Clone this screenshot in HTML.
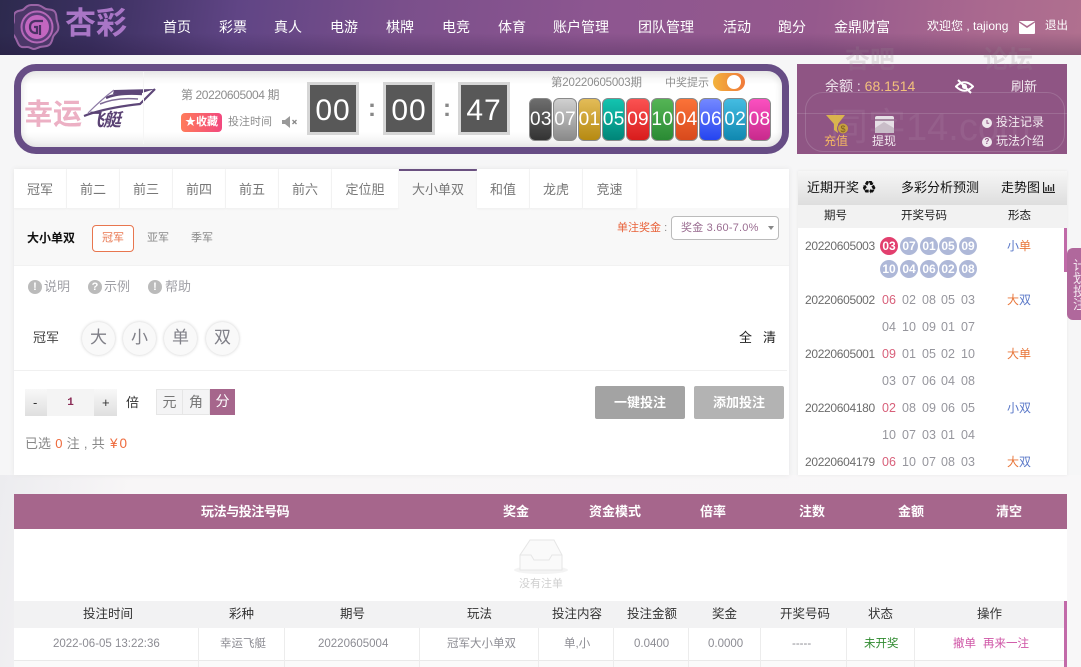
<!DOCTYPE html>
<html lang="zh"><head><meta charset="utf-8"><title>幸运飞艇</title>
<style>
*{box-sizing:border-box}
html,body{margin:0;padding:0}
body{width:1081px;height:667px;overflow:hidden;position:relative;background:#f6f6f7;font-family:"Liberation Sans","Noto Sans CJK SC",sans-serif;font-size:12px;color:#666}
.a{position:absolute}
.t{position:absolute;white-space:nowrap;text-align:center}
.nav{color:#fff;font-size:14px;top:17px;line-height:20px}
.tab{position:absolute;top:169px;height:39px;line-height:41px;text-align:center;font-size:13px;color:#777;background:#fff;border-right:1px solid #f5f5f5;box-shadow:0 1px 2px #eee}
.ball{position:absolute;top:98px;width:23.4px;height:43px;border-radius:6px;border:1px solid #8a8a8a;color:#fff;font-size:19px;line-height:41px;text-align:center;letter-spacing:.3px}
.box{position:absolute;top:82px;width:52px;height:53px;background:#585858;border:3px solid #d6d6d6;color:#fff;font-size:30px;line-height:51px;text-align:center;letter-spacing:1px}
.colon{position:absolute;top:95px;color:#888;font-size:24px;line-height:28px;font-weight:bold}
.circ{position:absolute;top:322px;width:33px;height:33px;border-radius:50%;background:#f9f9f9;box-shadow:0 0 3px #ccc;color:#808088;font-size:17px;line-height:31px;text-align:center}
.ico{position:absolute;width:14px;height:14px;border-radius:50%;background:#bbb;color:#fff;font-size:11px;font-weight:bold;line-height:14px;text-align:center}
.g{color:#a0a0a6}
.n{position:absolute;width:20px;text-align:center;font-size:12.5px;line-height:16px;color:#96969d}
.n.r{color:#d8607a}
.bl{position:absolute;width:18px;height:18px;border-radius:50%;background:#aeb8d8;color:#fff;font-size:12px;line-height:18px;text-align:center;font-weight:bold}
.p{position:absolute;left:805px;font-size:12px;letter-spacing:-.32px;line-height:16px;color:#6c6c6c}
.f{position:absolute;left:1007px;font-size:12px;line-height:16px}
.bh{position:absolute;top:503px;color:#fff;font-weight:bold;font-size:13px;line-height:18px;white-space:nowrap;text-align:center}
.th{position:absolute;top:606px;color:#333;font-size:12.5px;line-height:17px;text-align:center;white-space:nowrap}
.td{position:absolute;top:636px;color:#8c8c93;font-size:11.5px;line-height:17px;text-align:center;white-space:nowrap}
.vl{position:absolute;top:628px;width:1px;height:39px;background:#ececec}
</style></head><body>

<!-- soft background wash -->
<div class="a" style="left:0;top:475px;width:1081px;height:192px;background:linear-gradient(100deg,#ececef 0,#f8f6f7 12%,#f8f7f8 100%)"></div>

<!-- header -->
<div class="a" style="left:0;top:0;width:1081px;height:55px;background:linear-gradient(to bottom,rgba(255,255,255,0) 60%,rgba(30,15,50,.25) 100%),linear-gradient(98deg,#2d2a4e 0,#3b3060 9%,#604585 22%,#7a4f8b 37%,#8d5690 55%,#95598d 75%,#a9688f 90%,#b0708f 100%)"></div>
<svg class="a" style="left:14px;top:3px" width="46" height="47" viewBox="0 0 46 47">
<path d="M23 2c4 0 6 3 9 4s7 0 9 3 1 6 2 9 2 6 1 9-4 4-5 7-1 6-4 8-6 1-9 2-4 2-6 2-4-2-7-2-6 1-8-2-2-5-4-8-4-5-4-8 3-5 3-8-1-7 2-9 6-1 8-3 4-4 7-4z" fill="#4b3768" stroke="#9a64a6" stroke-width="2"/>
<circle cx="23" cy="24" r="15.500" fill="#5a3c78" stroke="#b468b8" stroke-width="2"/>
<circle cx="23" cy="24" r="12" fill="#c266c0"/>
<path d="M29 18h-8q-5 1-5 6t5 6h2v-6h-3M26 22v10" fill="none" stroke="#4a3064" stroke-width="2.200"/>
</svg>
<div class="t" style="left:65px;top:5px;font-size:31px;line-height:38px;font-weight:bold;color:#a976c6;letter-spacing:0">杏彩</div>

<div class="t nav" style="left:163px">首页</div>
<div class="t nav" style="left:219px">彩票</div>
<div class="t nav" style="left:274px">真人</div>
<div class="t nav" style="left:330px">电游</div>
<div class="t nav" style="left:386px">棋牌</div>
<div class="t nav" style="left:442px">电竞</div>
<div class="t nav" style="left:498px">体育</div>
<div class="t nav" style="left:553px">账户管理</div>
<div class="t nav" style="left:638px">团队管理</div>
<div class="t nav" style="left:723px">活动</div>
<div class="t nav" style="left:778px">跑分</div>
<div class="t nav" style="left:834px">金鼎财富</div>
<div class="t" style="left:927px;top:17px;color:#fff;font-size:12px;line-height:18px">欢迎您 , tajiong</div>
<svg class="a" style="left:1019px;top:21px" width="16" height="13" viewBox="0 0 16 13"><path d="M0 1.500 8 7l8-5.500V12a1 1 0 0 1-1 1H1a1 1 0 0 1-1-1zM0 0h16L8 5z" fill="#fff"/></svg>
<div class="t" style="left:1045px;top:17px;color:#fff;font-size:11.500px;line-height:18px">退出</div>

<!-- game panel -->
<div class="a" style="left:14px;top:64px;width:775px;height:90px;border:7px solid #674d85;border-radius:22px;background:linear-gradient(to bottom,#eeeeee 0,#fff 18%,#fff 80%,#eee 100%);box-shadow:inset 0 0 8px #ddd"></div>
<svg class="a" style="left:80px;top:85px" width="78" height="36" viewBox="0 0 78 36">
<path d="M34 5 75 4 62 8 33 9z" fill="#5d4678"/>
<path d="M26 13C34 9 46 8 62 9" fill="none" stroke="#5d4678" stroke-width="2.500"/>
<path d="M20 19C32 14 46 13 58 14" fill="none" stroke="#7d6a95" stroke-width="1.500"/>
<path d="M4 31C22 24 42 21 60 19L75 4" fill="none" stroke="#5d4678" stroke-width="2.200"/>
<path d="M34 5C26 11 18 18 8 28" fill="none" stroke="#8d7aa5" stroke-width="1.200"/>
</svg>
<div class="t" style="left:24px;top:100px;font-size:29px;line-height:30px;font-weight:bold;color:#ecb0c4">幸运</div>
<div class="t" style="left:86px;top:108px;font-size:18px;line-height:24px;font-weight:bold;font-style:italic;color:#5a4274;letter-spacing:-1px">飞艇</div>
<div class="a" style="left:143px;top:72px;width:1px;height:72px;background:#f5f5f5"></div>
<div class="t" style="left:181px;top:87px;font-size:12px;line-height:17px;color:#8d8d8d;letter-spacing:-.4px">第 20220605004 期</div>
<div class="t" style="left:181px;top:113px;width:41px;height:19px;border-radius:4px;background:linear-gradient(90deg,#ff7b5a,#f2487e);color:#fff;font-size:11px;line-height:19px;font-weight:bold">★收藏</div>
<div class="t" style="left:228px;top:113px;font-size:11px;line-height:18px;color:#8d8d8d">投注时间</div>
<svg class="a" style="left:282px;top:116px" width="16" height="12" viewBox="0 0 16 12"><path d="M0 4h3l5-4v12L3 8H0z" fill="#999"/><path d="M10.500 4l4 4m0-4-4 4" stroke="#888" stroke-width="1.300"/></svg>

<div class="box" style="left:307px">00</div>
<div class="colon" style="left:368px">:</div>
<div class="box" style="left:383px">00</div>
<div class="colon" style="left:443px">:</div>
<div class="box" style="left:458px">47</div>

<div class="t" style="left:551px;top:75px;font-size:11.500px;line-height:16px;color:#8d8d8d;letter-spacing:-.2px">第20220605003期</div>
<div class="t" style="left:665px;top:75px;font-size:11px;line-height:16px;color:#8d8d8d">中奖提示</div>
<div class="a" style="left:713px;top:73px;width:32px;height:18px;border-radius:9px;background:linear-gradient(90deg,#f2b23c,#f0793a)"></div>
<div class="a" style="left:727px;top:75px;width:14px;height:14px;border-radius:50%;background:#fff"></div>

<div class="ball" style="left:529px;background:linear-gradient(#6e6e6e,#333)">03</div>
<div class="ball" style="left:553.300px;background:linear-gradient(#d0d0d0,#8a8a8a)">07</div>
<div class="ball" style="left:577.600px;background:linear-gradient(#e3bc58,#b68a12)">01</div>
<div class="ball" style="left:601.900px;background:linear-gradient(#13c4b0,#008578)">05</div>
<div class="ball" style="left:626.200px;background:linear-gradient(#fb5252,#d81c1c)">09</div>
<div class="ball" style="left:650.500px;background:linear-gradient(#55b555,#2a8a34)">10</div>
<div class="ball" style="left:674.800px;background:linear-gradient(#fb7338,#d84a1c)">04</div>
<div class="ball" style="left:699.100px;background:linear-gradient(#7488ff,#2444f0)">06</div>
<div class="ball" style="left:723.400px;background:linear-gradient(#44bce2,#1088b0)">02</div>
<div class="ball" style="left:747.700px;background:linear-gradient(#fb50c0,#c82a8c)">08</div>

<!-- balance panel -->
<div class="a" style="left:797px;top:64px;width:270px;height:90px;background:#8f5584"></div>
<!-- watermark -->
<div class="t" style="left:845px;top:44px;font-size:25px;line-height:32px;font-weight:bold;color:rgba(150,130,145,.22)">杏吧</div>
<div class="t" style="left:983px;top:44px;font-size:25px;line-height:32px;font-weight:bold;color:rgba(150,130,145,.22)">论坛</div>
<div class="a" style="left:805px;top:92px;width:260px;height:60px;border:1.500px solid rgba(215,200,215,.22);border-radius:18px"></div>
<div class="a" style="left:797px;top:113px;width:270px;height:1px;background:rgba(215,200,215,.2)"></div>
<div class="t" style="left:830px;top:106px;font-size:38px;line-height:44px;color:rgba(210,190,205,.1)">同字14.com</div>

<div class="t" style="left:825px;top:76px;font-size:14px;line-height:20px;color:#f0e6ee">余额 : <span style="color:#f2c07c">68.1514</span></div>
<svg class="a" style="left:955px;top:79px" width="19" height="15" viewBox="0 0 19 15"><path d="M1 7.500Q9.500-1 18 7.500 9.500 16 1 7.500z" fill="none" stroke="#fff" stroke-width="2"/><circle cx="9.500" cy="7.500" r="2.500" fill="#fff"/><path d="M3 1l13 13" stroke="#fff" stroke-width="2"/></svg>
<div class="t" style="left:1011px;top:77px;font-size:13px;line-height:19px;color:#f2eaf0">刷新</div>
<svg class="a" style="left:826px;top:115px" width="24" height="20" viewBox="0 0 24 20"><path d="M0 0h19l-7 9v9l-4-3V9z" fill="#d9b44e"/><circle cx="17" cy="13.500" r="5.500" fill="#c9a13e" stroke="#8f5584"/><text x="17" y="17" text-anchor="middle" font-size="9" fill="#7a5a20" font-family="Liberation Sans">$</text></svg>
<div class="t" style="left:824px;top:133px;font-size:12px;line-height:16px;color:#f4b763">充值</div>
<svg class="a" style="left:875px;top:116px" width="19" height="17" viewBox="0 0 19 17"><rect width="19" height="17" rx="2" fill="#e6e0e6"/><rect y="3" width="19" height="2" fill="#a78aa2"/><path d="M0 12 9 6l10 6v5H0z" fill="#c9bdc8"/></svg>
<div class="t" style="left:872px;top:133px;font-size:12px;line-height:16px;color:#f2eaf0">提现</div>
<svg class="a" style="left:982px;top:118px" width="10" height="10" viewBox="0 0 10 10"><circle cx="5" cy="5" r="5" fill="#f0e8ee"/><path d="M5 2v3.200h2.200" fill="none" stroke="#8f5584" stroke-width="1"/></svg>
<div class="t" style="left:996px;top:114px;font-size:12px;line-height:17px;color:#f2eaf0">投注记录</div>
<div class="a" style="left:982px;top:137px;width:10px;height:10px;border-radius:50%;background:#f0e8ee;color:#8f5584;font-size:8px;font-weight:bold;line-height:10px;text-align:center">?</div>
<div class="t" style="left:996px;top:133px;font-size:12px;line-height:17px;color:#f2eaf0">玩法介绍</div>

<!-- main panel -->
<div class="a" style="left:14px;top:169px;width:775px;height:306px;background:#fff;box-shadow:0 0 5px #e6e6e6"></div>
<div class="a" style="left:14px;top:208px;width:775px;height:58px;background:#f8f8f8;border-bottom:1px solid #f2f2f2"></div>
<div class="tab" style="left:14px;width:53px">冠军</div>
<div class="tab" style="left:67px;width:53px">前二</div>
<div class="tab" style="left:120px;width:53px">前三</div>
<div class="tab" style="left:173px;width:53px">前四</div>
<div class="tab" style="left:226px;width:53px">前五</div>
<div class="tab" style="left:279px;width:53px">前六</div>
<div class="tab" style="left:332px;width:67px">定位胆</div>
<div class="tab" style="left:399px;width:78px;height:39px;background:#f8f8f8;border-top:2px solid #6a5080;line-height:38px;box-shadow:none;border-right:0">大小单双</div>
<div class="tab" style="left:477px;width:53px">和值</div>
<div class="tab" style="left:530px;width:53px">龙虎</div>
<div class="tab" style="left:583px;width:54px">竞速</div>

<div class="t" style="left:27px;top:230px;font-size:12px;line-height:17px;color:#111;font-weight:bold">大小单双</div>
<div class="t" style="left:92px;top:225px;width:42px;height:27px;border:1px solid #e8764f;border-radius:4px;background:#fff;color:#e8764f;font-size:11px;line-height:25px">冠军</div>
<div class="t" style="left:147px;top:230px;font-size:11px;line-height:17px;color:#888">亚军</div>
<div class="t" style="left:191px;top:230px;font-size:11px;line-height:17px;color:#888">季军</div>
<div class="t" style="left:617px;top:220px;font-size:11px;line-height:17px;color:#e8623a">单注奖金 <span style="color:#888">:</span></div>
<div class="a" style="left:671px;top:216px;width:108px;height:24px;border:1px solid #bbb;border-radius:4px;background:#fff"></div>
<div class="t" style="left:681px;top:220px;font-size:11px;line-height:17px;color:#9a6d91;letter-spacing:.2px">奖金 3.60-7.0%</div>
<div class="a" style="left:768px;top:226px;width:0;height:0;border:3.500px solid transparent;border-top:4px solid #888"></div>

<div class="ico" style="left:28px;top:280px">!</div><div class="t g" style="left:44px;top:278px;font-size:13px;line-height:18px">说明</div>
<div class="ico" style="left:88px;top:280px">?</div><div class="t g" style="left:104px;top:278px;font-size:13px;line-height:18px">示例</div>
<div class="ico" style="left:148px;top:280px">!</div><div class="t g" style="left:165px;top:278px;font-size:13px;line-height:18px">帮助</div>

<div class="t" style="left:33px;top:329px;font-size:13px;line-height:18px;color:#444">冠军</div>
<div class="circ" style="left:82px">大</div>
<div class="circ" style="left:123px">小</div>
<div class="circ" style="left:164px">单</div>
<div class="circ" style="left:206px">双</div>
<div class="t" style="left:739px;top:329px;font-size:13px;line-height:18px;color:#222">全</div>
<div class="t" style="left:763px;top:329px;font-size:13px;line-height:18px;color:#222">清</div>
<div class="a" style="left:14px;top:370px;width:773px;height:1px;background:#f0f0f0"></div>

<div class="a" style="left:25px;top:389px;width:92px;height:27px;background:linear-gradient(#f8f8f8,#dfdfdf)"></div>
<div class="a" style="left:47px;top:389px;width:47px;height:27px;background:#f4f4f4"></div>
<div class="t" style="left:33px;top:395px;font-size:13px;line-height:16px;color:#333">-</div>
<div class="t" style="left:47px;top:395px;width:47px;font-size:11px;line-height:16px;color:#8a2a55;font-weight:bold;font-family:'Liberation Mono',monospace">1</div>
<div class="t" style="left:102px;top:395px;font-size:13px;line-height:16px;color:#333">+</div>
<div class="t" style="left:126px;top:394px;font-size:13px;line-height:17px;color:#333">倍</div>
<div class="t" style="left:156px;top:389px;width:27px;height:26px;background:#f4f4f5;border:1px solid #e6e6e6;font-size:14px;line-height:24px;color:#777">元</div>
<div class="t" style="left:183px;top:389px;width:27px;height:26px;background:#f4f4f5;border:1px solid #e6e6e6;border-left:0;font-size:14px;line-height:24px;color:#777">角</div>
<div class="t" style="left:210px;top:389px;width:25px;height:26px;background:#a6668c;font-size:14px;line-height:25px;color:#fff">分</div>

<div class="t" style="left:595px;top:386px;width:90px;height:33px;background:#a3a3a3;border-radius:2px;color:#fff;font-size:13px;font-weight:bold;line-height:33px">一键投注</div>
<div class="t" style="left:694px;top:386px;width:90px;height:33px;background:#b3b3b3;border-radius:2px;color:#fff;font-size:13px;font-weight:bold;line-height:33px">添加投注</div>
<div class="t" style="left:25px;top:435px;font-size:13px;line-height:18px;color:#888;word-spacing:.6px">已选 <span style="color:#ee6a3c">0</span> 注 , 共</div>
<div class="t" style="left:110px;top:435px;font-size:13.500px;line-height:18px;color:#ee6a3c;letter-spacing:2px">¥0</div>

<!-- recent draws -->
<div class="a" style="left:798px;top:171px;width:269px;height:304px;background:#fff;box-shadow:0 0 3px #e8e8e8"></div>
<div class="a" style="left:798px;top:171px;width:269px;height:34px;background:linear-gradient(#f6f6f6,#dedede)"></div>
<div class="a" style="left:798px;top:205px;width:269px;height:23px;background:#f2f2f2"></div>
<div class="t" style="left:807px;top:178px;font-size:13px;line-height:19px;color:#111">近期开奖 ♻</div>
<div class="t" style="left:901px;top:178px;font-size:13px;line-height:19px;color:#111">多彩分析预测</div>
<div class="t" style="left:1001px;top:178px;font-size:13px;line-height:19px;color:#111">走势图</div>
<svg class="a" style="left:1043px;top:182px" width="12" height="11" viewBox="0 0 12 11"><path d="M.5 0v10.500H12M3 5v4M5.500 3v6M8 5v4M10.500 2v7" fill="none" stroke="#222" stroke-width="1.300"/></svg>
<div class="t" style="left:824px;top:208px;font-size:11.500px;line-height:16px;color:#222">期号</div>
<div class="t" style="left:901px;top:208px;font-size:11.500px;line-height:16px;color:#222">开奖号码</div>
<div class="t" style="left:1008px;top:208px;font-size:11.500px;line-height:16px;color:#222">形态</div>
<div class="a" style="left:1064px;top:228px;width:3px;height:44px;background:#c06aa8"></div>

<div class="p" style="top:238px">20220605003</div>
<div class="bl" style="left:880px;top:237px;background:#e23f6e">03</div>
<div class="bl" style="left:900px;top:237px">07</div>
<div class="bl" style="left:920px;top:237px">01</div>
<div class="bl" style="left:939px;top:237px">05</div>
<div class="bl" style="left:959px;top:237px">09</div>
<div class="bl" style="left:880px;top:260px">10</div>
<div class="bl" style="left:900px;top:260px">04</div>
<div class="bl" style="left:920px;top:260px">06</div>
<div class="bl" style="left:939px;top:260px">02</div>
<div class="bl" style="left:959px;top:260px">08</div>
<div class="f" style="top:238px"><span style="color:#5a78c8">小</span><span style="color:#e8763a">单</span></div>

<div class="p" style="top:292px">20220605002</div>
<div class="n r" style="left:879px;top:292px">06</div><div class="n" style="left:899px;top:292px">02</div><div class="n" style="left:919px;top:292px">08</div><div class="n" style="left:938px;top:292px">05</div><div class="n" style="left:958px;top:292px">03</div>
<div class="n" style="left:879px;top:319px">04</div><div class="n" style="left:899px;top:319px">10</div><div class="n" style="left:919px;top:319px">09</div><div class="n" style="left:938px;top:319px">01</div><div class="n" style="left:958px;top:319px">07</div>
<div class="f" style="top:292px"><span style="color:#e8763a">大</span><span style="color:#5a78c8">双</span></div>

<div class="p" style="top:346px">20220605001</div>
<div class="n r" style="left:879px;top:346px">09</div><div class="n" style="left:899px;top:346px">01</div><div class="n" style="left:919px;top:346px">05</div><div class="n" style="left:938px;top:346px">02</div><div class="n" style="left:958px;top:346px">10</div>
<div class="n" style="left:879px;top:373px">03</div><div class="n" style="left:899px;top:373px">07</div><div class="n" style="left:919px;top:373px">06</div><div class="n" style="left:938px;top:373px">04</div><div class="n" style="left:958px;top:373px">08</div>
<div class="f" style="top:346px;color:#e8763a">大单</div>

<div class="p" style="top:400px">20220604180</div>
<div class="n r" style="left:879px;top:400px">02</div><div class="n" style="left:899px;top:400px">08</div><div class="n" style="left:919px;top:400px">09</div><div class="n" style="left:938px;top:400px">06</div><div class="n" style="left:958px;top:400px">05</div>
<div class="n" style="left:879px;top:427px">10</div><div class="n" style="left:899px;top:427px">07</div><div class="n" style="left:919px;top:427px">03</div><div class="n" style="left:938px;top:427px">01</div><div class="n" style="left:958px;top:427px">04</div>
<div class="f" style="top:400px;color:#5a78c8">小双</div>

<div class="p" style="top:454px">20220604179</div>
<div class="n r" style="left:879px;top:454px">06</div><div class="n" style="left:899px;top:454px">10</div><div class="n" style="left:919px;top:454px">07</div><div class="n" style="left:938px;top:454px">08</div><div class="n" style="left:958px;top:454px">03</div>
<div class="f" style="top:454px"><span style="color:#e8763a">大</span><span style="color:#5a78c8">双</span></div>

<!-- side tab -->
<div class="a" style="left:1067px;top:248px;width:14px;height:72px;background:#b0689c;border-radius:6px 0 0 6px;overflow:hidden">
<div style="position:absolute;left:6px;top:11px;width:14px;color:#f4e8f0;font-size:13px;line-height:13px;white-space:normal">计划投注</div></div>

<!-- bet list -->
<div class="a" style="left:14px;top:494px;width:1053px;height:35px;background:#a6668c"></div>
<div class="a" style="left:14px;top:529px;width:1053px;height:72px;background:#fff"></div>
<div class="bh" style="left:201px;letter-spacing:-.4px">玩法与投注号码</div>
<div class="bh" style="left:503px">奖金</div>
<div class="bh" style="left:589px">资金模式</div>
<div class="bh" style="left:700px">倍率</div>
<div class="bh" style="left:799px">注数</div>
<div class="bh" style="left:898px">金额</div>
<div class="bh" style="left:996px">清空</div>
<svg class="a" style="left:513px;top:537px" width="56" height="38" viewBox="0 0 56 38"><ellipse cx="28" cy="33" rx="27" ry="4" fill="#f3f3f3"/><path d="M7 18 17 3h24l8 15v15H7z" fill="#fafafa" stroke="#e6e6e6"/><path d="M7 18h11l3 5h15l3-5h10" fill="none" stroke="#e6e6e6"/></svg>
<div class="t" style="left:519px;top:577px;font-size:11px;line-height:15px;color:#cfcfcf">没有注单</div>

<div class="a" style="left:14px;top:601px;width:1053px;height:27px;background:#f2f2f3"></div>
<div class="a" style="left:14px;top:628px;width:1053px;height:39px;background:#fff"></div>
<div class="a" style="left:14px;top:660px;width:1053px;height:7px;background:#fafafa;border-top:1px solid #e9e9e9"></div>
<div class="a" style="left:1064px;top:601px;width:3px;height:66px;background:#c26aa9"></div>
<div class="vl" style="left:198px"></div><div class="vl" style="left:284px"></div><div class="vl" style="left:419px"></div><div class="vl" style="left:538px"></div><div class="vl" style="left:613px"></div><div class="vl" style="left:688px"></div><div class="vl" style="left:760px"></div><div class="vl" style="left:846px"></div><div class="vl" style="left:914px"></div>

<div class="th" style="left:83px">投注时间</div>
<div class="th" style="left:229px">彩种</div>
<div class="th" style="left:340px">期号</div>
<div class="th" style="left:467px">玩法</div>
<div class="th" style="left:552px">投注内容</div>
<div class="th" style="left:627px">投注金额</div>
<div class="th" style="left:712px">奖金</div>
<div class="th" style="left:780px">开奖号码</div>
<div class="th" style="left:868px">状态</div>
<div class="th" style="left:977px">操作</div>

<div class="td" style="left:53px">2022-06-05 13:22:36</div>
<div class="td" style="left:220px">幸运飞艇</div>
<div class="td" style="left:318px">20220605004</div>
<div class="td" style="left:447px">冠军大小单双</div>
<div class="td" style="left:564px">单,小</div>
<div class="td" style="left:634px">0.0400</div>
<div class="td" style="left:708px">0.0000</div>
<div class="td" style="left:792px">-----</div>
<div class="td" style="left:864px;color:#2f8a2f">未开奖</div>
<div class="td" style="left:953px;color:#cf55a6">撤单</div>
<div class="td" style="left:983px;color:#cf55a6">再来一注</div>
</body></html>
